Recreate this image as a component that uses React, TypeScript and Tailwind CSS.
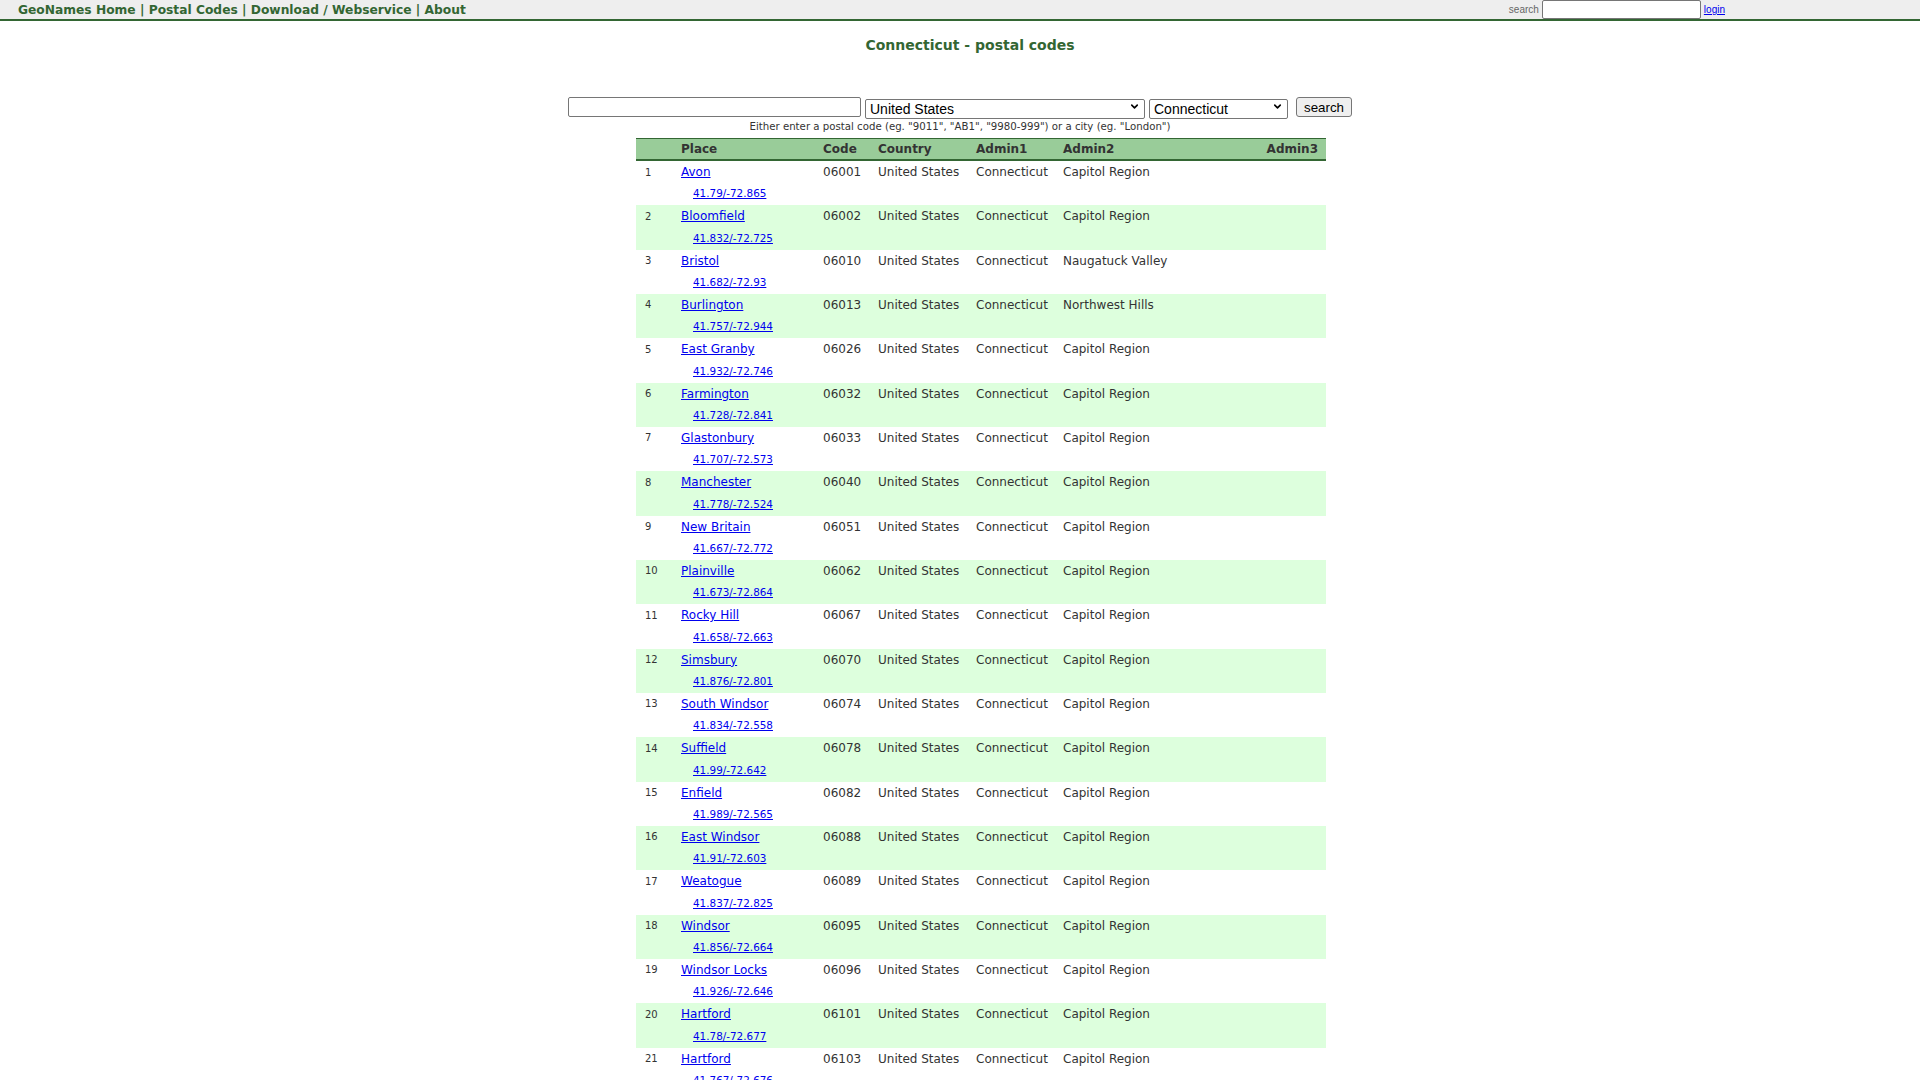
import { ChevronDown } from "lucide-react";

type Row = {
  place: string;
  code: string;
  coords: string;
  admin2: string;
};

const rows: Row[] = [
  { place: "Avon", code: "06001", coords: "41.79/-72.865", admin2: "Capitol Region" },
  { place: "Bloomfield", code: "06002", coords: "41.832/-72.725", admin2: "Capitol Region" },
  { place: "Bristol", code: "06010", coords: "41.682/-72.93", admin2: "Naugatuck Valley" },
  { place: "Burlington", code: "06013", coords: "41.757/-72.944", admin2: "Northwest Hills" },
  { place: "East Granby", code: "06026", coords: "41.932/-72.746", admin2: "Capitol Region" },
  { place: "Farmington", code: "06032", coords: "41.728/-72.841", admin2: "Capitol Region" },
  { place: "Glastonbury", code: "06033", coords: "41.707/-72.573", admin2: "Capitol Region" },
  { place: "Manchester", code: "06040", coords: "41.778/-72.524", admin2: "Capitol Region" },
  { place: "New Britain", code: "06051", coords: "41.667/-72.772", admin2: "Capitol Region" },
  { place: "Plainville", code: "06062", coords: "41.673/-72.864", admin2: "Capitol Region" },
  { place: "Rocky Hill", code: "06067", coords: "41.658/-72.663", admin2: "Capitol Region" },
  { place: "Simsbury", code: "06070", coords: "41.876/-72.801", admin2: "Capitol Region" },
  { place: "South Windsor", code: "06074", coords: "41.834/-72.558", admin2: "Capitol Region" },
  { place: "Suffield", code: "06078", coords: "41.99/-72.642", admin2: "Capitol Region" },
  { place: "Enfield", code: "06082", coords: "41.989/-72.565", admin2: "Capitol Region" },
  { place: "East Windsor", code: "06088", coords: "41.91/-72.603", admin2: "Capitol Region" },
  { place: "Weatogue", code: "06089", coords: "41.837/-72.825", admin2: "Capitol Region" },
  { place: "Windsor", code: "06095", coords: "41.856/-72.664", admin2: "Capitol Region" },
  { place: "Windsor Locks", code: "06096", coords: "41.926/-72.646", admin2: "Capitol Region" },
  { place: "Hartford", code: "06101", coords: "41.78/-72.677", admin2: "Capitol Region" },
  { place: "Hartford", code: "06103", coords: "41.767/-72.676", admin2: "Capitol Region" },
  { place: "Hartford", code: "06105", coords: "41.769/-72.701", admin2: "Capitol Region" },
  { place: "Hartford", code: "06106", coords: "41.746/-72.696", admin2: "Capitol Region" },
];

const cols = "grid grid-cols-[45px_142px_55px_98px_87px_1fr_90px]";

function Select({ value, width }: { value: string; width: string }) {
  return (
    <div className={`relative h-[20px] ${width}`}>
      <select
        defaultValue={value}
        className="h-full w-full appearance-none rounded-[2px] border border-[#767676] bg-white py-0 pl-[4px] font-['Liberation_Sans',Arial,sans-serif] text-[14px] leading-[16px] text-black"
      >
        <option>{value}</option>
      </select>
      <ChevronDown
        className="pointer-events-none absolute right-[5px] top-[4px] h-[11px] w-[11px] text-black"
        strokeWidth={3.5}
      />
    </div>
  );
}

export default function App() {
  return (
    <div className="min-h-screen bg-white font-['DejaVu_Sans',Verdana,sans-serif] text-[#333]">
      <div className="flex h-[21px] items-center justify-between border-b-2 border-[#336633] bg-[#eeeeee] pl-[18px] pr-[195px]">
        <div className="pt-[1px] text-[12.25px] font-bold text-[#336633]">
          <a href="#">GeoNames Home</a> | <a href="#">Postal Codes</a> |{" "}
          <a href="#">Download / Webservice</a> | <a href="#">About</a>
        </div>
        <div className="flex items-center gap-[3px] font-['Liberation_Sans',Arial,sans-serif] text-[10px]">
          <span className="text-[#666]">search</span>
          <input className="h-[19px] w-[159px] rounded-[2px] border border-[#767676] bg-white" />
          <a href="#" className="text-[#0000ee] underline">
            login
          </a>
        </div>
      </div>

      <h1 className="mt-[16px] pl-[20px] text-center text-[14px] font-bold leading-[17px] text-[#336633]">
        Connecticut - postal codes
      </h1>

      <form className="mt-[43px] flex items-center justify-center">
        <input className="h-[20px] w-[293px] rounded-[2px] border border-[#767676] bg-white" />
        <div className="ml-[4px]">
          <Select value="United States" width="w-[280px]" />
        </div>
        <div className="ml-[4px]">
          <Select value="Connecticut" width="w-[139px]" />
        </div>
        <button
          type="button"
          className="ml-[8px] h-[20px] w-[56px] rounded-[3px] border border-[#767676] bg-[#efefef] font-['Liberation_Sans',Arial,sans-serif] text-[13.33px] text-black"
        >
          search
        </button>
      </form>
      <p className="mt-[3px] text-center text-[10.2px] leading-[13px] text-[#333]">
        Either enter a postal code (eg. "9011", "AB1", "9980-999") or a city (eg. "London")
      </p>

      <div className="ml-[636px] mt-[5px] w-[690px]">
        <div className={`${cols} h-[23px] items-center border-t border-b-2 border-[#336633] bg-[#99cc99] text-[12px] font-bold text-[#333]`}>
          <span />
          <span>Place</span>
          <span>Code</span>
          <span>Country</span>
          <span>Admin1</span>
          <span>Admin2</span>
          <span className="pr-[8px] text-right">Admin3</span>
        </div>
        {rows.map((r, i) => (
          <div key={i} className={`h-[44.33px] ${i % 2 === 1 ? "bg-[#ddffdd]" : "bg-white"}`}>
            <div className={`${cols} h-[22px] items-center text-[12px]`}>
              <span className="pl-[9px] text-[10px]">{i + 1}</span>
              <a href="#" className="text-[#0000ee] underline">
                {r.place}
              </a>
              <span>{r.code}</span>
              <span>United States</span>
              <span>Connecticut</span>
              <span>{r.admin2}</span>
              <span />
            </div>
            <div className="flex h-[22.33px] items-center pl-[57px]">
              <a href="#" className="text-[10.4px] text-[#0000ee] underline">
                {r.coords}
              </a>
            </div>
          </div>
        ))}
      </div>
    </div>
  );
}
